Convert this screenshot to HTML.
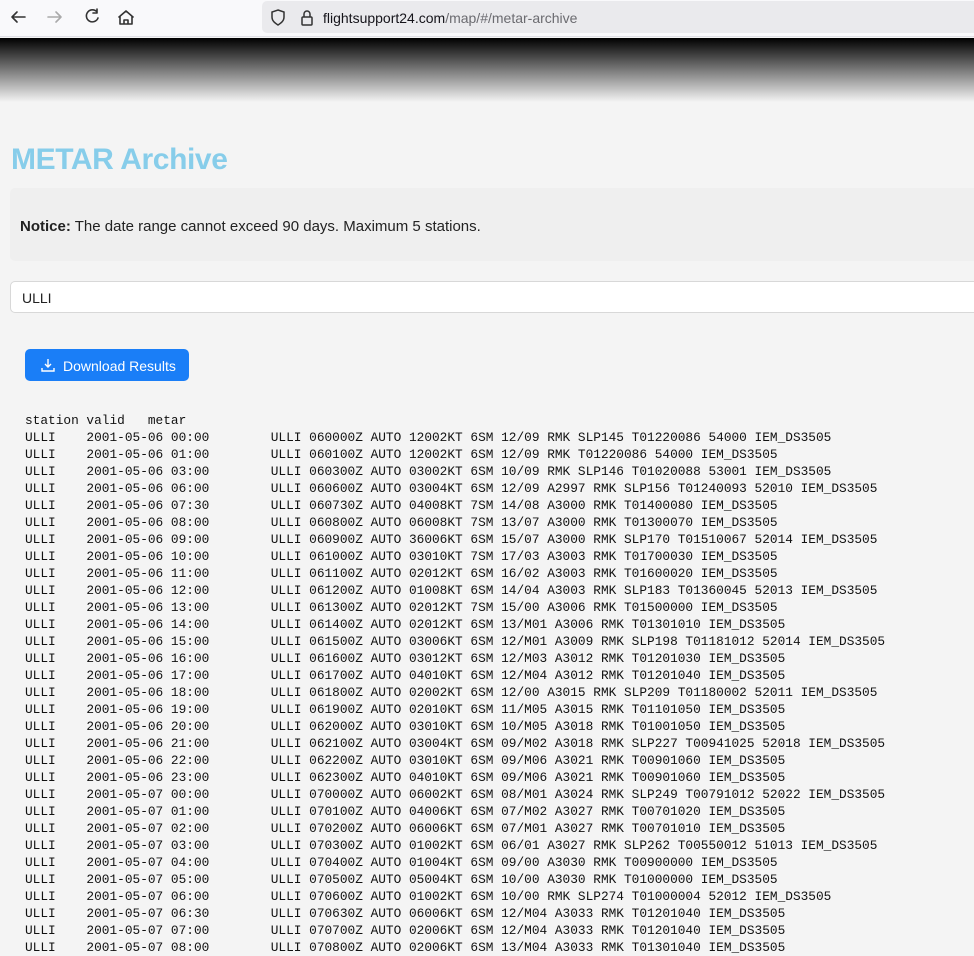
<!DOCTYPE html>
<html><head><meta charset="utf-8"><style>
*{margin:0;padding:0;box-sizing:border-box}
body{width:974px;height:942px;overflow:hidden;background:#f4f4f4;font-family:"Liberation Sans",sans-serif;position:relative}
.bar{position:absolute;left:0;top:0;width:974px;height:37px;background:#f9f9fb;border-bottom:1px solid #e0e0e6}
.url{position:absolute;left:262px;top:1px;width:720px;height:32px;background:#eaeaed;border-radius:5px}
.urltext{position:absolute;left:323px;top:10px;font-size:14px;color:#15141a}
.urltext span{color:#6b6b70}
.grad{position:absolute;left:0;top:38px;width:974px;height:64px;background:linear-gradient(#000,#f4f4f4)}
h1{position:absolute;left:11px;top:143px;font-size:30px;font-weight:bold;color:#87cdea;letter-spacing:-0.4px}
.notice{position:absolute;left:10px;top:188px;width:980px;height:73px;background:#efefef;border-radius:5px;font-size:15px;color:#222;padding:30px 0 0 10px}
.inp{position:absolute;left:10px;top:281px;width:980px;height:32px;background:#fff;border:1px solid #d8d8d8;border-radius:5px;font-size:14px;padding:8px 0 0 11px;color:#222}
.btn{position:absolute;left:25px;top:349px;width:164px;height:32px;background:#1a7ef7;border-radius:5px;color:#fff;font-size:14px;padding:9px 0 0 38px}
pre{position:absolute;left:25px;top:412px;font-family:"Liberation Mono",monospace;font-size:12.8px;line-height:17px;color:#111}
</style></head><body>
<div class="bar">
<svg width="260" height="37" style="position:absolute;left:0;top:0" fill="none" stroke-width="1.6" stroke-linecap="round" stroke-linejoin="round">
<path d="M25 17H12M17 12l-5 5 5 5" stroke="#333"/>
<path d="M48 17h13M56 12l5 5-5 5" stroke="#aaa"/>
<path d="M97 12a6 6 0 1 0 1 6M97 9v4h-4" stroke="#333"/>
<path d="M119 17l7-6 7 6M120 16v8h12v-8M124 24v-4h4v4" stroke="#333"/>
</svg>
<div class="url"></div>
<svg width="50" height="37" style="position:absolute;left:265px;top:0" fill="none" stroke="#333" stroke-width="1.5">
<path d="M13 10l6 2v5c0 4-3 6-6 8-3-2-6-4-6-8v-5z"/>
<rect x="37" y="17" width="10" height="8" rx="1"/><path d="M39 17v-3a3 3 0 0 1 6 0v3"/>
</svg>
<div class="urltext">flightsupport24.com<span>/map/#/metar-archive</span></div>
</div>
<div class="grad"></div>
<h1>METAR Archive</h1>
<div class="notice"><b>Notice:</b> The date range cannot exceed 90 days. Maximum 5 stations.</div>
<div class="inp">ULLI</div>
<div class="btn"><svg width="14" height="14" style="position:absolute;left:16px;top:9px" fill="none" stroke="#fff" stroke-width="1.4"><path d="M7 1v8M4 6l3 3 3-3M1 10v3h12v-3"/></svg>Download Results</div>
<pre>station valid   metar
ULLI    2001-05-06 00:00        ULLI 060000Z AUTO 12002KT 6SM 12/09 RMK SLP145 T01220086 54000 IEM_DS3505
ULLI    2001-05-06 01:00        ULLI 060100Z AUTO 12002KT 6SM 12/09 RMK T01220086 54000 IEM_DS3505
ULLI    2001-05-06 03:00        ULLI 060300Z AUTO 03002KT 6SM 10/09 RMK SLP146 T01020088 53001 IEM_DS3505
ULLI    2001-05-06 06:00        ULLI 060600Z AUTO 03004KT 6SM 12/09 A2997 RMK SLP156 T01240093 52010 IEM_DS3505
ULLI    2001-05-06 07:30        ULLI 060730Z AUTO 04008KT 7SM 14/08 A3000 RMK T01400080 IEM_DS3505
ULLI    2001-05-06 08:00        ULLI 060800Z AUTO 06008KT 7SM 13/07 A3000 RMK T01300070 IEM_DS3505
ULLI    2001-05-06 09:00        ULLI 060900Z AUTO 36006KT 6SM 15/07 A3000 RMK SLP170 T01510067 52014 IEM_DS3505
ULLI    2001-05-06 10:00        ULLI 061000Z AUTO 03010KT 7SM 17/03 A3003 RMK T01700030 IEM_DS3505
ULLI    2001-05-06 11:00        ULLI 061100Z AUTO 02012KT 6SM 16/02 A3003 RMK T01600020 IEM_DS3505
ULLI    2001-05-06 12:00        ULLI 061200Z AUTO 01008KT 6SM 14/04 A3003 RMK SLP183 T01360045 52013 IEM_DS3505
ULLI    2001-05-06 13:00        ULLI 061300Z AUTO 02012KT 7SM 15/00 A3006 RMK T01500000 IEM_DS3505
ULLI    2001-05-06 14:00        ULLI 061400Z AUTO 02012KT 6SM 13/M01 A3006 RMK T01301010 IEM_DS3505
ULLI    2001-05-06 15:00        ULLI 061500Z AUTO 03006KT 6SM 12/M01 A3009 RMK SLP198 T01181012 52014 IEM_DS3505
ULLI    2001-05-06 16:00        ULLI 061600Z AUTO 03012KT 6SM 12/M03 A3012 RMK T01201030 IEM_DS3505
ULLI    2001-05-06 17:00        ULLI 061700Z AUTO 04010KT 6SM 12/M04 A3012 RMK T01201040 IEM_DS3505
ULLI    2001-05-06 18:00        ULLI 061800Z AUTO 02002KT 6SM 12/00 A3015 RMK SLP209 T01180002 52011 IEM_DS3505
ULLI    2001-05-06 19:00        ULLI 061900Z AUTO 02010KT 6SM 11/M05 A3015 RMK T01101050 IEM_DS3505
ULLI    2001-05-06 20:00        ULLI 062000Z AUTO 03010KT 6SM 10/M05 A3018 RMK T01001050 IEM_DS3505
ULLI    2001-05-06 21:00        ULLI 062100Z AUTO 03004KT 6SM 09/M02 A3018 RMK SLP227 T00941025 52018 IEM_DS3505
ULLI    2001-05-06 22:00        ULLI 062200Z AUTO 03010KT 6SM 09/M06 A3021 RMK T00901060 IEM_DS3505
ULLI    2001-05-06 23:00        ULLI 062300Z AUTO 04010KT 6SM 09/M06 A3021 RMK T00901060 IEM_DS3505
ULLI    2001-05-07 00:00        ULLI 070000Z AUTO 06002KT 6SM 08/M01 A3024 RMK SLP249 T00791012 52022 IEM_DS3505
ULLI    2001-05-07 01:00        ULLI 070100Z AUTO 04006KT 6SM 07/M02 A3027 RMK T00701020 IEM_DS3505
ULLI    2001-05-07 02:00        ULLI 070200Z AUTO 06006KT 6SM 07/M01 A3027 RMK T00701010 IEM_DS3505
ULLI    2001-05-07 03:00        ULLI 070300Z AUTO 01002KT 6SM 06/01 A3027 RMK SLP262 T00550012 51013 IEM_DS3505
ULLI    2001-05-07 04:00        ULLI 070400Z AUTO 01004KT 6SM 09/00 A3030 RMK T00900000 IEM_DS3505
ULLI    2001-05-07 05:00        ULLI 070500Z AUTO 05004KT 6SM 10/00 A3030 RMK T01000000 IEM_DS3505
ULLI    2001-05-07 06:00        ULLI 070600Z AUTO 01002KT 6SM 10/00 RMK SLP274 T01000004 52012 IEM_DS3505
ULLI    2001-05-07 06:30        ULLI 070630Z AUTO 06006KT 6SM 12/M04 A3033 RMK T01201040 IEM_DS3505
ULLI    2001-05-07 07:00        ULLI 070700Z AUTO 02006KT 6SM 12/M04 A3033 RMK T01201040 IEM_DS3505
ULLI    2001-05-07 08:00        ULLI 070800Z AUTO 02006KT 6SM 13/M04 A3033 RMK T01301040 IEM_DS3505</pre>
</body></html>
